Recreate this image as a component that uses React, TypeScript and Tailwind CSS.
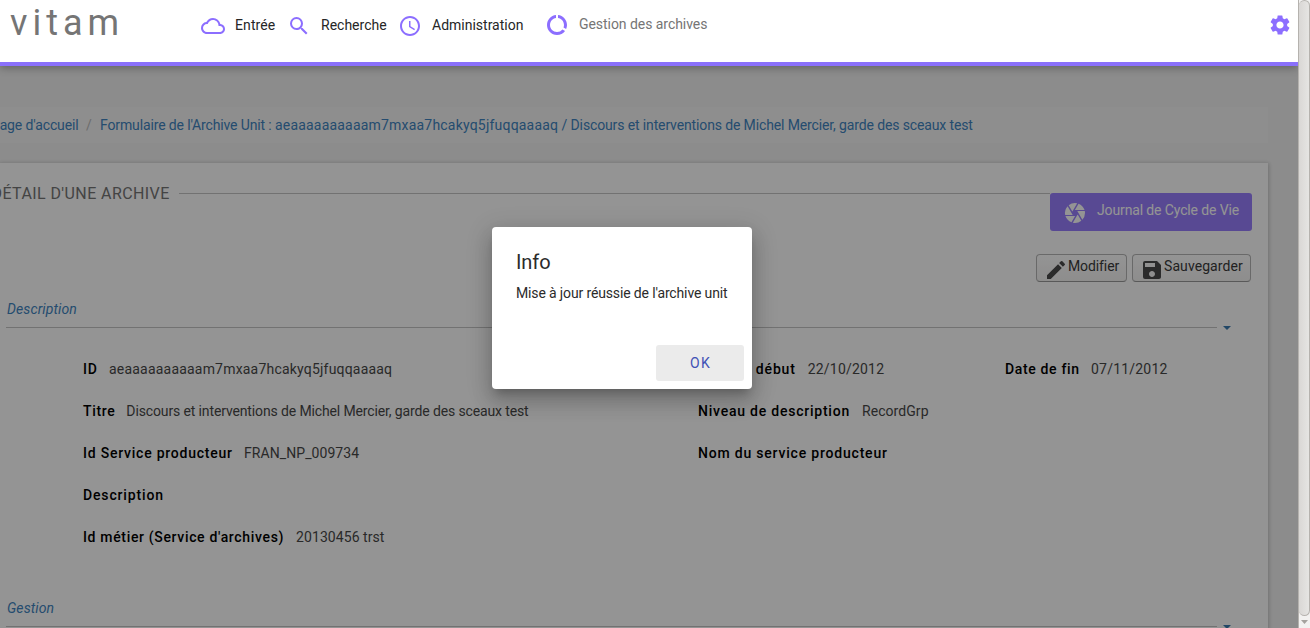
import React from "react";
import {
  MdCloudQueue,
  MdSearch,
  MdAccessTime,
  MdDataUsage,
  MdSettings,
  MdCamera,
  MdEdit,
  MdSave,
} from "react-icons/md";

type FieldProps = {
  label: string;
  value?: string;
  className?: string;
  labelClass?: string;
  valueClass?: string;
};

function Field({
  label,
  value,
  className = "",
  labelClass = "tracking-[0.77px]",
  valueClass = "ml-[12px] tracking-[0.07px]",
}: FieldProps) {
  return (
    <div className={`flex h-[42px] items-center whitespace-nowrap ${className}`}>
      <span className={`font-medium text-black ${labelClass}`}>{label}</span>
      {value && <span className={`text-[#484848] ${valueClass}`}>{value}</span>}
    </div>
  );
}

function Section({ title }: { title: string }) {
  return (
    <div className="h-[30px]">
      <div className="pl-px leading-5 tracking-[0.1px] text-[#4084c0] italic">{title}</div>
      <div className="mt-[5px] flex h-[7px] items-center">
        <div className="h-px w-[1211px] bg-[#c4c4c4]" />
        <svg className="mt-px ml-[6px]" width="8" height="4" viewBox="0 0 8 4">
          <path d="M0 0h8L4 4z" fill="#3c7ab0" />
        </svg>
      </div>
    </div>
  );
}

function Header() {
  return (
    <header className="relative z-20 flex h-[66px] items-start border-b-4 border-[#8a70fb] bg-white shadow-[0_2px_8px_rgba(0,0,0,0.3)]">
      <div className="w-[201px] pl-[10px] text-[36px] leading-[46px] tracking-[5px] text-[#757575]">vitam</div>
      <nav className="flex h-[50px] items-center text-[14px] text-[#262626]">
        <a className="flex w-[86px] items-center gap-[10px] tracking-[0.1px]">
          <MdCloudQueue className="mt-[2px] size-[24px] shrink-0 text-[#8c6eff]" />
          Entrée
        </a>
        <a className="flex w-[111px] items-center gap-[10px]">
          <MdSearch className="mt-[2px] size-[24px] shrink-0 text-[#8c6eff]" />
          Recherche
        </a>
        <a className="flex w-[147px] items-center gap-[10px]">
          <MdAccessTime className="mt-[2px] size-[24px] shrink-0 text-[#8c6eff]" />
          Administration
        </a>
        <a className="flex items-center gap-[10px] tracking-[-0.05px] text-[#757575]">
          <MdDataUsage className="size-[24px] shrink-0 text-[#8c6eff]" />
          <span className="-mt-[2px]">Gestion des archives</span>
        </a>
      </nav>
      <MdSettings className="mt-[13px] mr-[6px] ml-auto size-[24px] text-[#8c6eff]" />
    </header>
  );
}

function Scrollbar() {
  return (
    <div className="flex h-full w-[12px] flex-col border-l border-[#b5b2ae] bg-[#f2f1f0]">
      <div className="h-[616px] rounded-[6px] border border-l-0 border-[#b5b2ae] bg-linear-to-r from-[#d9d7d5] to-[#e6e5e3]" />
      <svg className="mx-auto mt-[4px]" width="7" height="4" viewBox="0 0 7 4">
        <path d="M0 0h7L3.5 4z" fill="#a5a29e" />
      </svg>
    </div>
  );
}

function Dialog() {
  return (
    <div className="absolute top-[227px] left-[492px] z-30 flex h-[162px] w-[260px] flex-col rounded-[4px] bg-white px-6 pt-6 text-[#2b2b2b] shadow-[0_7px_8px_-4px_rgba(0,0,0,0.2),0_13px_19px_2px_rgba(0,0,0,0.14),0_5px_24px_4px_rgba(0,0,0,0.12)]">
      <h2 className="text-[20px] leading-[23px] tracking-[-0.1px]">Info</h2>
      <p className="mt-[9px] leading-5 tracking-[-0.14px] whitespace-nowrap">Mise à jour réussie de l'archive unit</p>
      <button className="mt-[42px] -mr-4 ml-auto h-9 w-[88px] rounded-[3px] bg-[#ebebeb] pl-px tracking-[1.3px] text-[#3f51b5]">
        OK
      </button>
    </div>
  );
}

const actionButton =
  "flex h-[28px] items-center rounded-[4px] border border-[#b5b5b5] border-b-[#999] bg-linear-to-b from-white to-[#f4f3f2] pl-[7px]";

export default function App() {
  return (
    <div className="relative flex h-[628px] w-[1310px] overflow-hidden font-['Roboto',sans-serif] text-[14px]">
      <div className="flex w-[1298px] flex-col overflow-hidden">
        <Header />
        <main className="relative h-[562px] overflow-hidden bg-[#f2f2f2] pt-[41px]">
          <div className="flex h-9 w-[1268px] items-center bg-[#f5f5f5] whitespace-nowrap text-[#4084c0]">
            <span className="-ml-[9px] w-[87px] tracking-[-0.13px]">Page d'accueil</span>
            <span className="ml-[8px] w-[14px] text-[#bbb]">/</span>
            <span className="whitespace-pre">
              <span className="tracking-[-0.13px]">Formulaire de l'Archive Unit : </span>
              <span className="tracking-[0.2px]">aeaaaaaaaaaam7mxaa7hcakyq5jfuqqaaaaq</span>
              <span className="tracking-[-0.13px]">
                {" / Discours et interventions de Michel Mercier, garde des sceaux test"}
              </span>
            </span>
          </div>
          <section className="mt-[20px] h-[600px] w-[1268px] bg-white shadow-[0_1px_4px_1px_rgba(0,0,0,0.2)]">
            <div className="flex h-[90px] pt-[20px]">
              <h1 className="-ml-[8.5px] w-[187.5px] pt-px text-[16px] leading-[20px] tracking-[0.41px] whitespace-nowrap text-[#757575]">
                DÉTAIL D'UNE ARCHIVE
              </h1>
              <div className="mt-[10px] h-px w-[871px] bg-[#c4c4c4]" />
              <button className="mt-[10px] flex h-[38px] w-[202px] items-center rounded-[3px] bg-[#987ffd] pl-[13px] text-white">
                <MdCamera className="mt-px size-[24px]" />
                <span className="-mt-[3px] ml-[10px] tracking-[-0.13px] whitespace-nowrap">Journal de Cycle de Vie</span>
              </button>
            </div>
            <div className="flex h-[29px] justify-end gap-[5px] pt-px pr-[17px] text-[#3a3a3a]">
              <button className={`w-[91px] ${actionButton}`}>
                <MdEdit className="mt-[3px] size-[24px] shrink-0 text-[#4a4a4a]" />
                <span className="-mt-[3px] tracking-[-0.1px] whitespace-nowrap">Modifier</span>
              </button>
              <button className={`w-[119px] ${actionButton}`}>
                <MdSave className="mt-[3px] size-[24px] shrink-0 text-[#4a4a4a]" />
                <span className="-mt-[3px] tracking-[0.08px] whitespace-nowrap">Sauvegarder</span>
              </button>
            </div>
            <div className="mt-[17px] pl-[6px]">
              <Section title="Description" />
              <div className="grid grid-cols-[615px_307px_200px] pt-[19px] pl-[77px]">
                <Field
                  label="ID"
                  value="aeaaaaaaaaaam7mxaa7hcakyq5jfuqqaaaaq"
                  valueClass="ml-[11.4px] tracking-[0.2px]"
                />
                <Field
                  label="Date de début"
                  value="22/10/2012"
                  labelClass="tracking-[0.83px]"
                  valueClass="ml-[12px] tracking-[0.2px]"
                />
                <Field
                  label="Date de fin"
                  value="07/11/2012"
                  labelClass="tracking-[0.65px]"
                  valueClass="ml-[11.4px] tracking-[0.2px]"
                />
                <Field
                  label="Titre"
                  value="Discours et interventions de Michel Mercier, garde des sceaux test"
                  labelClass="tracking-[0.65px]"
                  valueClass="ml-[11px] tracking-[-0.13px]"
                />
                <Field label="Niveau de description" value="RecordGrp" className="col-span-2" />
                <Field label="Id Service producteur" value="FRAN_NP_009734" valueClass="ml-[11.2px] tracking-[0.07px]" />
                <Field label="Nom du service producteur" className="col-span-2" labelClass="tracking-[0.8px]" />
                <Field label="Description" className="col-span-3" labelClass="tracking-[0.85px]" />
                <Field
                  label="Id métier (Service d'archives)"
                  value="20130456 trst"
                  className="col-span-3"
                  labelClass="tracking-[0.66px]"
                />
              </div>
              <div className="mt-[40px]">
                <Section title="Gestion" />
              </div>
            </div>
          </section>
          <div className="absolute inset-0 z-10 bg-black/42" />
        </main>
      </div>
      <Scrollbar />
      <Dialog />
    </div>
  );
}
